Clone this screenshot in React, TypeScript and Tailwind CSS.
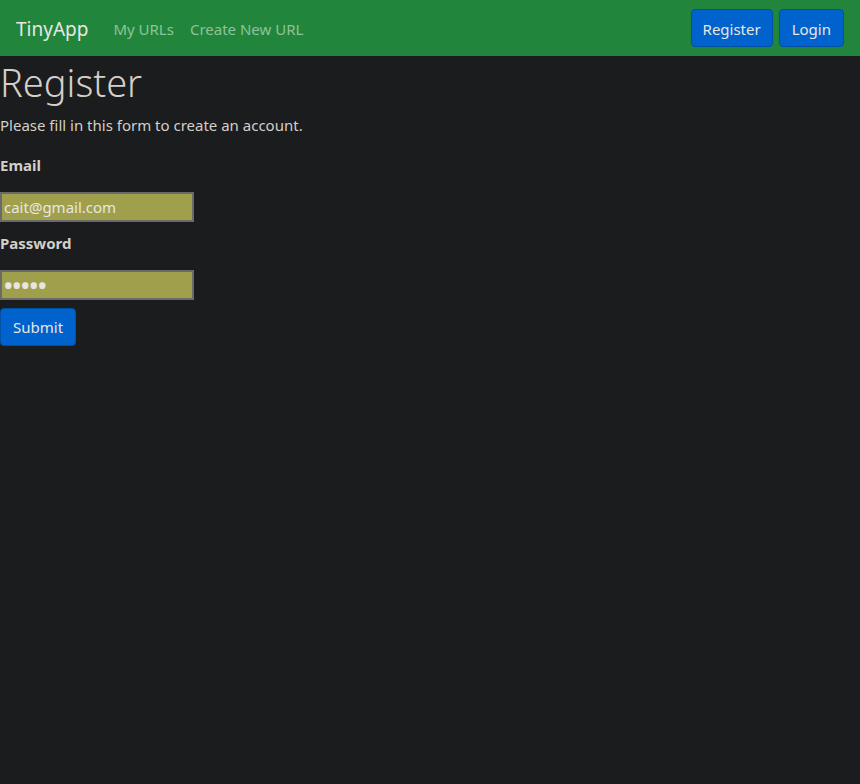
export default function App() {
  return (
    <div className="min-h-screen bg-[#1b1c1e] text-[#d3cfc9] font-['Noto_Sans',sans-serif]">
      {/* Navbar */}
      <nav className="h-14 bg-[#21863b] flex items-center justify-between pl-4 pr-4">
        <div className="flex items-center pt-[2px]">
          <span className="text-[19px] text-[#e8e6e3] mr-[25px]">TinyApp</span>
          <a className="text-[15px] text-[#8fc29a] mr-4">My URLs</a>
          <a className="text-[15px] text-[#8fc29a]">Create New URL</a>
        </div>
        <div className="flex items-center gap-1.5">
          <button className="h-[38px] px-[11px] pt-[2px] rounded bg-[#0062cc] border border-[#0050a8] text-[15px] text-[#e8e6e3]">Register</button>
          <button className="h-[38px] px-3 pt-[2px] rounded bg-[#0062cc] border border-[#0050a8] text-[15px] text-[#e8e6e3]">Login</button>
        </div>
      </nav>

      {/* Form */}
      <main>
        <h1 className="text-[38px] font-light leading-[48px] mt-[2px]">Register</h1>
        <p className="text-[15px] leading-[24px] mt-[7px]">Please fill in this form to create an account.</p>
        <form className="flex flex-col items-start">
          <label className="text-[15px] leading-[24px] font-bold mt-[16px]">Email</label>
          <input
            className="mt-[15px] w-[194px] h-[30px] bg-[#a0a04c] border-2 border-[#6a6a6a] px-[2px] text-[15px] text-[#e8e6e3] outline-none"
            defaultValue="cait@gmail.com"
          />
          <label className="text-[15px] leading-[24px] font-bold mt-[9px]">Password</label>
          <input
            type="password"
            className="mt-[15px] w-[194px] h-[30px] bg-[#a0a04c] border-2 border-[#6a6a6a] px-[1px] text-[28px] tracking-[-2px] text-[#e8e6e3] outline-none"
            defaultValue="aaaaa"
          />
          <button className="mt-[8px] h-[38px] px-3 rounded bg-[#0062cc] border border-[#0050a8] text-[15px] text-[#e8e6e3]">Submit</button>
        </form>
      </main>
    </div>
  );
}
